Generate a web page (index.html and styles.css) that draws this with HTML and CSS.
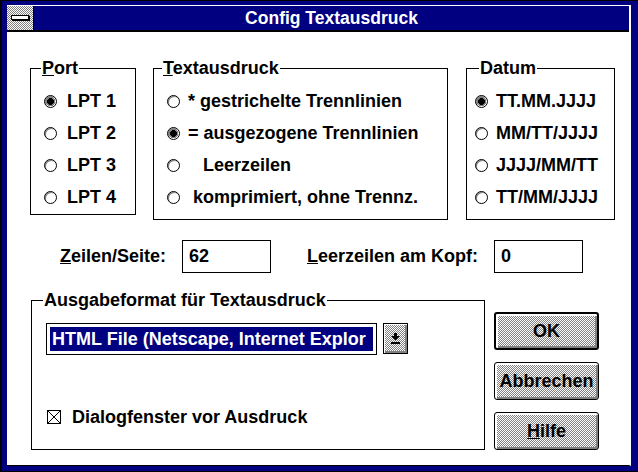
FILE: index.html
```html
<!DOCTYPE html>
<html lang="de">
  <head>
    <meta charset="UTF-8" />
    <title>Config Textausdruck</title>
    <link rel="stylesheet" href="styles.css">
  </head>
  <body>
    <div class="frame">
      <div class="window">
        <div class="titlebar">
          <div class="sysmenu"><span class="sysbar"></span></div>
          <div class="caption">Config Textausdruck</div>
        </div>

        <div class="client">
          <div class="top-row">
            <fieldset class="group group-port">
              <legend><u>P</u>ort</legend>
              <div class="options">
                <div class="option"><span class="radio checked"></span>LPT 1</div>
                <div class="option"><span class="radio"></span>LPT 2</div>
                <div class="option"><span class="radio"></span>LPT 3</div>
                <div class="option"><span class="radio"></span>LPT 4</div>
              </div>
            </fieldset>

            <fieldset class="group group-text">
              <legend><u>T</u>extausdruck</legend>
              <div class="options">
                <div class="option"><span class="radio"></span>* gestrichelte Trennlinien</div>
                <div class="option"><span class="radio checked"></span>= ausgezogene Trennlinien</div>
                <div class="option"><span class="radio"></span>   Leerzeilen</div>
                <div class="option"><span class="radio"></span> komprimiert, ohne Trennz.</div>
              </div>
            </fieldset>

            <fieldset class="group group-date">
              <legend>Datum</legend>
              <div class="options">
                <div class="option"><span class="radio checked"></span>TT.MM.JJJJ</div>
                <div class="option"><span class="radio"></span>MM/TT/JJJJ</div>
                <div class="option"><span class="radio"></span>JJJJ/MM/TT</div>
                <div class="option"><span class="radio"></span>TT/MM/JJJJ</div>
              </div>
            </fieldset>
          </div>

          <div class="spin-row">
            <span class="lbl-lines"><u>Z</u>eilen/Seite:</span>
            <div class="edit">62</div>
            <span class="lbl-head"><u>L</u>eerzeilen am Kopf:</span>
            <div class="edit">0</div>
          </div>

          <div class="bottom-row">
            <fieldset class="group group-format">
              <legend>Ausgabeformat für Textausdruck</legend>
              <div class="combo-row">
                <div class="combo">
                  <div class="sel">HTML File (Netscape, Internet Explor</div>
                </div>
                <div class="drop">
                  <svg width="9" height="11" viewBox="0 0 9 11">
                    <rect x="3" y="0" width="3" height="3" fill="#000" />
                    <polygon points="0,3 9,3 4.5,7.5" fill="#000" />
                    <rect x="0" y="9" width="9" height="2" fill="#000" />
                  </svg>
                </div>
              </div>
              <div class="check-line">
                <span class="checkbox">
                  <svg width="12" height="12" viewBox="0 0 12 12">
                    <path d="M0 0 L12 12 M12 0 L0 12" stroke="#000" stroke-width="1" />
                  </svg>
                </span>
                Dialogfenster vor Ausdruck
              </div>
            </fieldset>

            <div class="buttons">
              <div class="btn default">OK</div>
              <div class="btn">Abbrechen</div>
              <div class="btn"><u>H</u>ilfe</div>
            </div>
          </div>
        </div>
      </div>
    </div>
  </body>
</html>
```
FILE: styles.css
```css
* {
  box-sizing: border-box;
}
html,
body {
  margin: 0;
  padding: 0;
}

body {
  background: #000080;
  color: #000;
  font-family: "Liberation Sans", Arial, sans-serif;
  font-size: 18px;
  font-weight: bold;
}

.frame {
  width: 638px;
  height: 472px;
  border-top: 1px solid #000;
  border-left: 2px solid #000;
  border-bottom: 1px solid #000;
  padding: 4px 7px 5px 5px;
}

.window {
  height: 461px;
  background: #fff;
  border-top: 1px solid #fff;
  border-right: 2px solid #fff;
  border-bottom: 1px solid #000;
  display: flex;
  flex-direction: column;
}

/* title bar */
.titlebar {
  display: flex;
  height: 26px;
  border-bottom: 2px solid #000;
}
.sysmenu {
  width: 27px;
  border-right: 1px solid #000;
  padding: 9px 0 0 4px;
  background: repeating-conic-gradient(#808080 0 25%, #fff 0 50%) 0 0 / 2px 2px;
}
.sysbar {
  display: block;
  width: 18px;
  height: 5px;
  background: #fff;
  border: 1px solid #000;
  box-shadow: 1px 1px 0 #000;
}
.caption {
  flex: 1;
  background: #000080;
  color: #fff;
  text-align: center;
  line-height: 24px;
  font-size: 17.5px;
}

.client {
  flex: 1;
  padding-top: 26px;
}

/* group boxes */
.group {
  margin: 0;
  padding: 0;
  min-width: 0;
  border: 1px solid #000;
}
.group legend {
  padding: 0 1px;
  line-height: 20px;
}

.top-row {
  display: flex;
  align-items: flex-start;
  padding-left: 23px;
}
.group-port {
  width: 106px;
  height: 157px;
}
.group-port legend {
  margin-left: 10px;
}
.group-text {
  width: 295px;
  height: 162px;
  margin-left: 17px;
}
.group-text legend {
  margin-left: 8px;
}
.group-date {
  width: 149px;
  height: 162px;
  margin-left: 18px;
}
.group-date legend {
  margin-left: 12px;
}

.options {
  padding: 7px 0 0 13px;
}
.group-date .options {
  padding-left: 8px;
}
.option {
  display: flex;
  align-items: center;
  height: 32px;
  white-space: pre;
}

.radio {
  width: 13px;
  height: 13px;
  margin-right: 10px;
  border: 1px solid #000;
  border-radius: 50%;
  background: #fff;
  box-shadow: inset 1px 1px 0 #808080;
}
.group-text .radio,
.group-date .radio {
  margin-right: 8px;
}
.radio.checked {
  background: radial-gradient(circle, #000 0 3.5px, #808080 3.5px 4.5px, #fff 4.5px);
}

/* Zeilen / Leerzeilen */
.spin-row {
  display: flex;
  align-items: center;
  margin: 20px 0 0 53px;
}
.lbl-lines {
  width: 122px;
}
.lbl-head {
  width: 187px;
  margin-left: 36px;
}
.edit {
  width: 89px;
  height: 33px;
  border: 1px solid #000;
  padding-left: 6px;
  line-height: 31px;
}

/* Ausgabeformat + buttons */
.bottom-row {
  display: flex;
  align-items: flex-start;
  margin: 17px 0 0 24px;
}
.group-format {
  width: 454px;
  height: 160px;
}
.group-format legend {
  margin-left: 11px;
}
.combo-row {
  display: flex;
  gap: 6px;
  padding: 13px 0 0 14px;
}
.combo {
  width: 331px;
  height: 32px;
  border: 1px solid #000;
  padding: 3px;
}
.combo .sel {
  height: 24px;
  line-height: 24px;
  padding-left: 2px;
  background: #000080;
  color: #fff;
  white-space: nowrap;
}
.drop {
  width: 25px;
  height: 31px;
  display: flex;
  align-items: center;
  justify-content: center;
  border: 1px solid #000;
  background: repeating-conic-gradient(#808080 0 25%, #fff 0 50%) 0 0 / 2px 2px;
  box-shadow: inset 1px 1px 0 #fff, inset -2px -2px 0 #808080;
}

.check-line {
  display: flex;
  align-items: center;
  margin: 52px 0 0 15px;
  line-height: 20px;
}
.checkbox {
  display: flex;
  width: 14px;
  height: 14px;
  margin-right: 11px;
  border: 1px solid #000;
}

.buttons {
  display: flex;
  flex-direction: column;
  gap: 12px;
  margin-left: 9px;
  padding-top: 22px;
}
.btn {
  width: 105px;
  height: 38px;
  border: 1px solid #000;
  border-radius: 3px;
  text-align: center;
  line-height: 36px;
  background: repeating-conic-gradient(#808080 0 25%, #fff 0 50%) 0 0 / 2px 2px;
  box-shadow: inset 2px 2px 0 #fff, inset -2px -2px 0 #808080;
}
.btn.default {
  border-width: 2px;
  line-height: 34px;
}
```
